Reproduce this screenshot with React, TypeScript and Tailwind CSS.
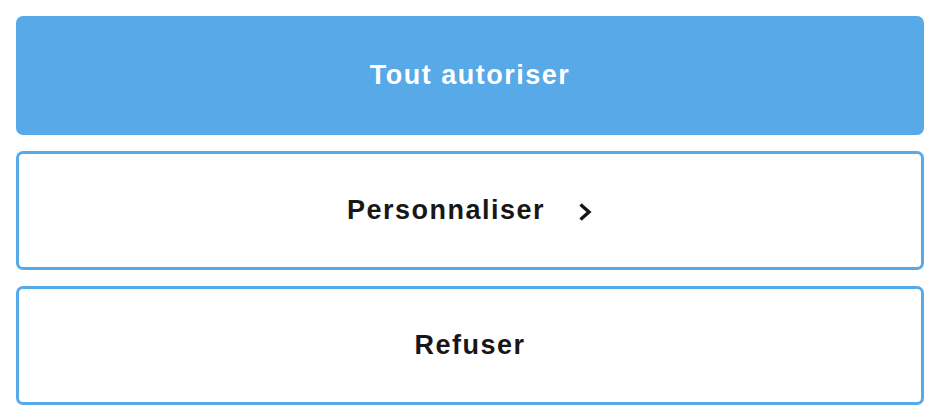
import React from 'react';

const App = () => {
  return (
    <div className="w-[942px] h-[420px] bg-white pt-4 pl-4 pr-[18px] flex flex-col gap-4 font-['Liberation_Sans',Arial,sans-serif]">
      <button className="h-[119px] w-full rounded-[7px] bg-[#58a9e8] text-white text-[27px] font-bold tracking-[1.5px]">
        Tout autoriser
      </button>
      <button className="h-[119px] w-full rounded-[7px] border-[3px] border-[#58a9e8] bg-white text-[#171717] text-[27px] font-bold tracking-[1.5px] flex items-center justify-center">
        <span>Personnaliser</span>
        <svg className="ml-[32px] mt-[2px]" width="16" height="20" viewBox="0 0 16 20" fill="none">
          <path d="M3.5 2.5 L12 10 L3.5 17.5" stroke="#171717" strokeWidth="3.4" strokeLinecap="butt" strokeLinejoin="miter" />
        </svg>
      </button>
      <button className="h-[119px] w-full rounded-[7px] border-[3px] border-[#58a9e8] bg-white text-[#171717] text-[27px] font-bold tracking-[1.5px]">
        Refuser
      </button>
    </div>
  );
};

export default App;
